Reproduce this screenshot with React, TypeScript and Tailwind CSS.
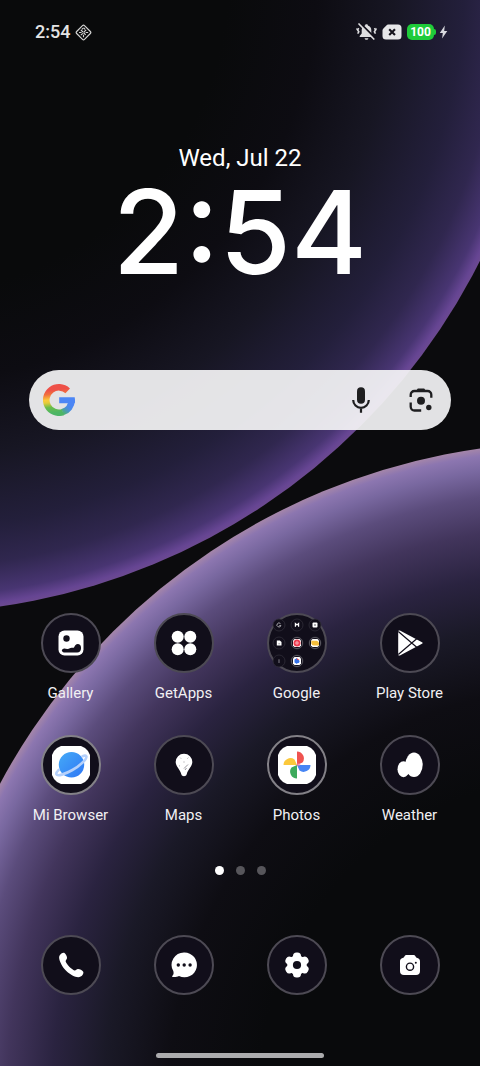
import { ReactNode } from "react";

interface AppIconProps {
  name: string;
  children: ReactNode;
  bright?: boolean;
  showLabel?: boolean;
}

const Wallpaper = () => (
  <svg
    className="absolute inset-0 h-full w-full"
    viewBox="0 0 480 1066"
    preserveAspectRatio="xMidYMid slice"
    aria-hidden="true"
  >
    <defs>
      <radialGradient id="upper" gradientUnits="userSpaceOnUse" cx="-91" cy="-26" r="639">
        <stop offset="0.5" stopColor="#090a0b" />
        <stop offset="0.64" stopColor="#0d0c12" />
        <stop offset="0.76" stopColor="#171623" />
        <stop offset="0.87" stopColor="#231f3b" />
        <stop offset="0.93" stopColor="#30274f" />
        <stop offset="0.975" stopColor="#483572" />
        <stop offset="0.993" stopColor="#664593" />
        <stop offset="1" stopColor="#6c4a90" />
      </radialGradient>
      <radialGradient id="lower" gradientUnits="userSpaceOnUse" cx="571" cy="1090" r="648">
        <stop offset="0.48" stopColor="#090a0c" />
        <stop offset="0.62" stopColor="#0e0d13" />
        <stop offset="0.72" stopColor="#1a1927" />
        <stop offset="0.8" stopColor="#2a2340" />
        <stop offset="0.87" stopColor="#42355c" />
        <stop offset="0.925" stopColor="#5b4c7c" />
        <stop offset="0.965" stopColor="#7968a0" />
        <stop offset="0.988" stopColor="#8c76b0" />
        <stop offset="1" stopColor="#a586a9" />
      </radialGradient>
    </defs>
    <rect width="480" height="1066" fill="#0b0b0d" />
    <circle cx="-91" cy="-26" r="639" fill="url(#upper)" />
    <circle cx="571" cy="1090" r="648" fill="url(#lower)" />
  </svg>
);

const StatusBar = () => (
  <header className="flex items-center justify-between pt-5 pr-8 pl-[35px]">
    <div className="flex items-center gap-[5px]">
      <span className="text-[18px] leading-[24px] font-medium text-[#e4e4e4]">2:54</span>
      <svg className="h-[17px] w-[17px]" viewBox="0 0 16 16" fill="none" stroke="#d4d4d4" strokeWidth="1.1">
        <rect x="2.800" y="2.800" width="10.400" height="10.400" rx="1.300" transform="rotate(45 8 8)" />
        <path d="M8 3.500 9.500 5M5.500 5.500l2 2M10.500 5.500l-2.200 2.200M3.800 8h2.400M8 8l2 2.200M10 8h2.400M5.500 10.500l1.900-1.700M8 10.200v2.200M6.500 5l1-1" />
      </svg>
    </div>
    <div className="flex items-center gap-[5px]">
      <svg className="h-[18px] w-[21px]" viewBox="0 0 21 18">
        <path d="M10.500 1.200c.9 0 1.400.6 1.400 1.200 2.200.7 3.400 2.400 3.400 4.700v3.400l2 2.600v.8H3.700v-.8l2-2.600V7.100c0-2.300 1.200-4 3.400-4.700 0-.6.5-1.200 1.400-1.200zM8.600 15.200h3.800c-.2 1-1 1.600-1.900 1.600s-1.700-.6-1.900-1.600z" fill="#dedee0" />
        <path d="M2.700 5.200 1.600 7l1.200 1.800-1.100 1.900M.5 5.500v1M18.500 5.200 19.600 7l-1.200 1.800 1.100 1.900M20.500 5.500v1" fill="none" stroke="#dedee0" strokeWidth="1.600" />
        <path d="M4.500.5 19 15" stroke="#121019" strokeWidth="2" />
        <path d="M3 1l14.800 15" stroke="#dedee0" strokeWidth="1.700" strokeLinecap="round" />
      </svg>
      <svg className="h-4 w-5" viewBox="0 0 20 16">
        <path d="M6.200.5H16A3.500 3.500 0 0 1 19.500 4v8a3.500 3.500 0 0 1-3.500 3.500H4A3.500 3.500 0 0 1 .5 12V6.500c0-.8.3-1.500.9-2.100l3-3c.5-.6 1.100-.9 1.800-.9z" fill="#e6e6e8" />
        <path d="m7.200 5.200 5.800 5.800M13 5.200 7.200 11" stroke="#15131c" strokeWidth="2.100" />
      </svg>
      <div className="flex items-center">
        <span className="flex h-4 w-[27px] items-center justify-center rounded-[5px] bg-[#1fcb3a] text-[12px] leading-4 font-bold text-white">
          100
        </span>
        <span className="h-[6px] w-[2px] rounded-r-sm bg-[#1fcb3a]" />
        <svg className="ml-[3px] h-[14px] w-[9px]" viewBox="0 0 9 14" fill="#d8d8de">
          <path d="M5.800.5.8 8h3l-.7 5.500L8.300 6H5.200z" />
        </svg>
      </div>
    </div>
  </header>
);

const GoogleLogo = () => (
  <svg className="h-8 w-8 shrink-0" viewBox="0 0 32 32" fill="none" strokeWidth="6.600">
    <defs>
      <linearGradient id="gArc" gradientUnits="userSpaceOnUse" x1="0" y1="3" x2="3" y2="30">
        <stop offset="0.15" stopColor="#ee5148" />
        <stop offset="0.3" stopColor="#f1703f" />
        <stop offset="0.5" stopColor="#fbcb3a" />
        <stop offset="0.6" stopColor="#e5cb3a" />
        <stop offset="0.78" stopColor="#68bd4b" />
        <stop offset="1" stopColor="#4cb565" />
      </linearGradient>
      <linearGradient id="gBlue" gradientUnits="userSpaceOnUse" x1="19" y1="29" x2="27" y2="20">
        <stop offset="0" stopColor="#4cb565" />
        <stop offset="0.6" stopColor="#4a8ce0" />
        <stop offset="1" stopColor="#4c86f5" />
      </linearGradient>
    </defs>
    <path d="M24.700 6.800A12.700 12.700 0 1 0 20 28.050" stroke="url(#gArc)" />
    <path d="M19.500 28.200A12.700 12.700 0 0 0 28.600 16.200" stroke="url(#gBlue)" />
    <path d="M16.200 13.200h15.500a18 18 0 0 1 .1 6H16.200z" fill="#4c86f5" />
  </svg>
);

const SearchBar = () => (
  <form className="mx-[29px] mt-20 flex h-[60px] items-center rounded-full bg-[#f5f5f6]/92 pr-[16px] pl-[14px]">
    <GoogleLogo />
    <input type="search" aria-label="Search" className="h-full min-w-0 flex-1 bg-transparent px-3 text-[18px] text-[#202124] outline-none" />
    <button type="button" aria-label="Voice search" className="mr-[32px]">
      <svg className="h-7 w-7" viewBox="0 0 28 28" fill="none" stroke="#1e1e20" strokeWidth="2.200">
        <rect x="10" y="1.200" width="8" height="16.500" rx="4" fill="#1e1e20" stroke="none" />
        <path d="M6.200 14a7.800 7.800 0 0 0 15.600 0M14 21.800v5" />
      </svg>
    </button>
    <button type="button" aria-label="Search with camera">
      <svg className="h-7 w-7" viewBox="0 0 28 28" fill="none" stroke="#1e1e20" strokeWidth="2.300">
        <path d="M3.700 11V8.700A3.700 3.700 0 0 1 7.400 5h13.200a3.700 3.700 0 0 1 3.700 3.700v3M3.700 16.500v4.300a3.700 3.700 0 0 0 3.700 3.700h6.800" />
        <path d="M9 5l1.800-2.500h6.400L19 5z" fill="#1e1e20" stroke="none" />
        <circle cx="14" cy="14.700" r="4" fill="#1e1e20" stroke="none" />
        <circle cx="21.800" cy="21.500" r="2.700" fill="#1e1e20" stroke="none" />
      </svg>
    </button>
  </form>
);

const AppIcon = ({ name, children, bright, showLabel = true }: AppIconProps) => (
  <button type="button" aria-label={name} className="flex flex-col items-center">
    <span
      className={`flex h-[60px] w-[60px] items-center justify-center rounded-full border-2 bg-[#110e1a] ${bright ? "border-[#838187]" : "border-[#4d4a54]"}`}
    >
      {children}
    </span>
    {showLabel && <span className="mt-[10px] text-[15px] leading-[20px] whitespace-nowrap text-[#f1f0f3]">{name}</span>}
  </button>
);

const Gallery = () => (
  <svg className="h-[26px] w-[26px]" viewBox="0 0 26 26">
    <rect x="0.500" y="0.500" width="25" height="25" rx="6" fill="#fff" />
    <circle cx="8.500" cy="8.500" r="3.200" fill="#110e1a" />
    <path d="M4.500 21.700c-1.300-1.200-.5-2.800 1-3 1.800-.3 2.500.4 4 .3 2.300 0 2.700-1.400 4.400-1.200 1.300.1 1.900.1 2.400-.9.600-1.300 1.600-3.100 3.800-3 2.300.1 3.200 2.300 2.900 4.800-.2 2.200-1.500 3.900-3.800 3.900H8c-1.500 0-2.700-.1-3.500-.9z" fill="#110e1a" />
  </svg>
);

const GetApps = () => (
  <svg className="h-[26px] w-[26px]" viewBox="0 0 26 26" fill="#fff">
    <circle cx="6.700" cy="6.700" r="6" />
    <circle cx="19.300" cy="6.700" r="6" />
    <circle cx="6.700" cy="19.300" r="6" />
    <circle cx="19.300" cy="19.300" r="6" />
  </svg>
);

const miniSpots = [
  [12, 12], [30, 12], [48, 12],
  [12, 30], [30, 30], [48, 30],
  [12, 48], [30, 48],
];

const GoogleFolder = () => (
  <svg className="h-[60px] w-[60px] shrink-0" viewBox="0 0 60 60" fill="none">
    {miniSpots.map(([x, y]) => (
      <circle key={`${x}-${y}`} cx={x} cy={y} r="6" fill="#110e1a" stroke="#302d38" strokeWidth="0.800" />
    ))}
    <path d="M13.500 10.700a2 2 0 1 0 .4 1.800h-1.600" stroke="#b4b3b8" strokeWidth="0.900" />
    <path d="M28.400 13.800v-3.200l1.600 1.400 1.600-1.400v3.200" stroke="#fff" strokeWidth="1.200" />
    <rect x="45.500" y="9.500" width="5" height="5" rx="1" fill="#fff" />
    <path d="M47 12h2m-1-1v2" stroke="#77757e" strokeWidth="0.700" />
    <path d="M9.800 27.600h3l1.700 1.500v3.300H9.800z" fill="#fff" />
    <path d="M11.300 30.800h1.800" stroke="#77757e" strokeWidth="0.700" />
    <circle cx="30" cy="30" r="5.600" stroke="#66646c" strokeWidth="0.800" />
    <path d="M27.500 26h5l1.500 1.500v5L32.500 34h-5L26 32.500v-5z" fill="#fff" />
    <circle cx="30" cy="30" r="3.500" fill="#ee3b50" />
    <circle cx="30" cy="30" r="1.200" stroke="#fff" strokeWidth="0.600" />
    <circle cx="48" cy="30" r="5.600" stroke="#66646c" strokeWidth="0.800" />
    <path d="M45.500 26h5l1.500 1.500v5L50.500 34h-5L44 32.500v-5z" fill="#fff" />
    <path d="M44.300 27.800h5.200a2.800 2.800 0 0 1 2.500 2.400v2.200h-5a2.700 2.700 0 0 1-2.700-2z" fill="#f6bf3c" />
    <path d="M12 46.300v3.700" stroke="#8c8a93" strokeWidth="0.900" />
    <circle cx="30" cy="48" r="5.600" stroke="#66646c" strokeWidth="0.800" />
    <path d="M27.500 44h5l1.500 1.500v5L32.500 52h-5L26 50.500v-5z" fill="#fff" />
    <path d="M27.500 46.500 30 45l1 3-1 3-2.500-1.500z" fill="#3572e8" />
    <path d="m29.500 45 3 2-2 1.500z" fill="#e9454a" />
    <circle cx="30.800" cy="48.500" r="1.700" fill="#3572e8" />
  </svg>
);

const PlayStore = () => (
  <svg className="h-[26px] w-[26px]" viewBox="0 0 26 26">
    <path d="M1.200 1.500c0-1 .9-1.400 1.700-.9L25 12.200c.8.400.8 1.200 0 1.600L2.900 25.400c-.8.500-1.700.1-1.700-.9z" fill="#fff" />
    <path d="M1.300 1.500 20 17.500M1.300 24.500 20 8.500" stroke="#110e1a" strokeWidth="1.200" />
  </svg>
);

const MiBrowser = () => (
  <svg className="h-[38px] w-[38px] shrink-0" viewBox="0 0 38 38">
    <defs>
      <linearGradient id="planet" x1="0" y1="0" x2="1" y2="1">
        <stop offset="0" stopColor="#45aaf7" />
        <stop offset="1" stopColor="#2f77f5" />
      </linearGradient>
    </defs>
    <path d="M9 0h20l4 2 3 3 2 4v20l-2 4-3 3-4 2H9l-4-2-3-3-2-4V9l2-4 3-3z" fill="#fff" />
    <circle cx="19.500" cy="18.800" r="12.700" fill="url(#planet)" />
    <path d="M30.500 10.200c2.200-.8 3.600-.7 3.900.2.800 2.600-6.300 9.200-14 13.600-7.700 4.400-15.200 6.500-16 4.300-.4-1 .5-2.600 2.300-4.400" fill="none" stroke="#b5d0fb" strokeWidth="2.600" strokeLinecap="round" />
  </svg>
);

const Maps = () => (
  <svg className="h-6 w-[18px]" viewBox="0 0 18 24">
    <path d="M9 .7a8.200 8.200 0 0 1 8.300 8.400c0 4.500-4.200 7-5.600 12.200-.5 1.400-1.300 1.900-2.700 1.900s-2.200-.5-2.700-1.900C4.900 16.100.7 13.600.7 9.100A8.200 8.200 0 0 1 9 .7z" fill="#fff" />
    <path d="m5.200 4.700.8.800M8.500 9h1M12.500 5.500l.8-.8M9 15.500l4-4M10 17l1.500-2M4 12.500l.8.600" stroke="#6e6c75" strokeWidth="0.700" />
  </svg>
);

const Photos = () => (
  <svg className="h-[38px] w-[38px] shrink-0" viewBox="0 0 38 38">
    <path d="M9 0h20l4 2 3 3 2 4v20l-2 4-3 3-4 2H9l-4-2-3-3-2-4V9l2-4 3-3z" fill="#fff" />
    <path d="M19 19V5.500a6.900 6.900 0 0 1 5.500 11z" fill="#ef5350" />
    <path d="M19 19h13.500a6.900 6.900 0 0 1-11 5.500z" fill="#4685f4" />
    <path d="M19 19v13.500a6.900 6.900 0 0 1-5.500-11z" fill="#3daa5c" />
    <path d="M19 19H5.500a6.900 6.900 0 0 1 11-5.500z" fill="#fbc83b" />
    <circle cx="20.500" cy="18.500" r="1.800" fill="#ec6fa0" opacity="0.600" />
  </svg>
);

const Weather = () => (
  <svg className="h-[26px] w-[26px]" viewBox="0 0 26 26" fill="#fff">
    <ellipse cx="17" cy="12.800" rx="8.700" ry="12.200" />
    <ellipse cx="6.500" cy="17.200" rx="6" ry="8" />
  </svg>
);

const Phone = () => (
  <svg className="h-[26px] w-[26px]" viewBox="0 0 26 26">
    <path d="M1.600 3.500C2.700 1.800 5 .1 6.500 1c1.400.9 2.700 3.700 2.500 5.200-.2 1.400-1.600 2-1.300 3.300.5 2.500 6.200 8.300 8.800 8.900 1.300.3 2-1.200 3.400-1.300 1.600-.1 4.600 1.300 5.300 2.700.8 1.500-.9 3.800-2.600 4.800-3.200 1.800-9.500-1-14-5.300S-.4 6.700 1.600 3.500z" fill="#fff" />
  </svg>
);

const Messages = () => (
  <svg className="h-[26px] w-[26px]" viewBox="0 0 26 26">
    <path d="M13.300.5A12.400 12.400 0 1 1 8 24c-1.700.9-4 1.200-6.200 1-.8-.1-1-.8-.4-1.300 1.300-1.100 1.400-2.700.9-4.600A12.400 12.400 0 0 1 13.300.5z" fill="#fff" />
    <g fill="#110e1a">
      <circle cx="7.300" cy="13" r="1.700" />
      <circle cx="13.200" cy="13" r="1.700" />
      <circle cx="19.100" cy="13" r="1.700" />
    </g>
  </svg>
);

const Settings = () => (
  <svg className="h-[26px] w-[26px]" viewBox="0 0 26 26">
    <g fill="#fff">
      <circle cx="13" cy="13" r="9.800" />
      <rect x="9" y="0.400" width="8" height="25.200" rx="3.600" />
      <rect x="9" y="0.400" width="8" height="25.200" rx="3.600" transform="rotate(60 13 13)" />
      <rect x="9" y="0.400" width="8" height="25.200" rx="3.600" transform="rotate(120 13 13)" />
    </g>
    <circle cx="13" cy="13" r="4.100" fill="#110e1a" />
  </svg>
);

const Camera = () => (
  <svg className="h-[22px] w-[22px]" viewBox="0 0 22 22">
    <path d="M7.800 1h6.400c1.500 0 2 .6 2.400 1.600.4.900.8 1.300 1.800 1.500 1.700.4 2.600 1.500 2.600 3.400v9.500c0 2.700-1.300 4-4 4H5c-2.700 0-4-1.300-4-4V7.500c0-1.900.9-3 2.600-3.400 1-.2 1.400-.6 1.800-1.500C5.800 1.600 6.300 1 7.800 1z" fill="#fff" />
    <circle cx="11" cy="12.700" r="3.600" fill="none" stroke="#110e1a" strokeWidth="1.400" />
    <circle cx="16.800" cy="8.800" r="1" fill="#110e1a" />
  </svg>
);

export default function App() {
  return (
    <div className="relative min-h-screen overflow-hidden bg-[#0b0b0d] font-['Roboto',sans-serif] text-white">
      <Wallpaper />
      <div className="relative flex min-h-screen flex-col">
        <StatusBar />
        <main className="flex flex-1 flex-col">
          <section className="mt-[99px] flex flex-col items-center">
            <p className="text-[24px] leading-[30px]">Wed, Jul 22</p>
            <p className="mt-[2px] font-['Inter',sans-serif] text-[116px] leading-[115px] font-medium">2:54</p>
          </section>
          <SearchBar />
          <section className="mt-[183px] grid grid-cols-4 gap-y-8 px-[14px]">
            <AppIcon name="Gallery"><Gallery /></AppIcon>
            <AppIcon name="GetApps"><GetApps /></AppIcon>
            <AppIcon name="Google"><GoogleFolder /></AppIcon>
            <AppIcon name="Play Store"><PlayStore /></AppIcon>
            <AppIcon name="Mi Browser" bright><MiBrowser /></AppIcon>
            <AppIcon name="Maps"><Maps /></AppIcon>
            <AppIcon name="Photos" bright><Photos /></AppIcon>
            <AppIcon name="Weather"><Weather /></AppIcon>
          </section>
          <div className="mt-[41px] flex justify-center gap-3">
            <span className="h-[9px] w-[9px] rounded-full bg-white" />
            <span className="h-[9px] w-[9px] rounded-full bg-[#57565b]" />
            <span className="h-[9px] w-[9px] rounded-full bg-[#57565b]" />
          </div>
        </main>
        <nav aria-label="Dock" className="mt-[60px] grid grid-cols-4 px-[14px]">
          <AppIcon name="Phone" showLabel={false}><Phone /></AppIcon>
          <AppIcon name="Messages" showLabel={false}><Messages /></AppIcon>
          <AppIcon name="Settings" showLabel={false}><Settings /></AppIcon>
          <AppIcon name="Camera" showLabel={false}><Camera /></AppIcon>
        </nav>
        <div className="mx-auto mt-[58px] mb-2 h-[5px] w-[35%] rounded-full bg-[#acacae]" />
      </div>
    </div>
  );
}
